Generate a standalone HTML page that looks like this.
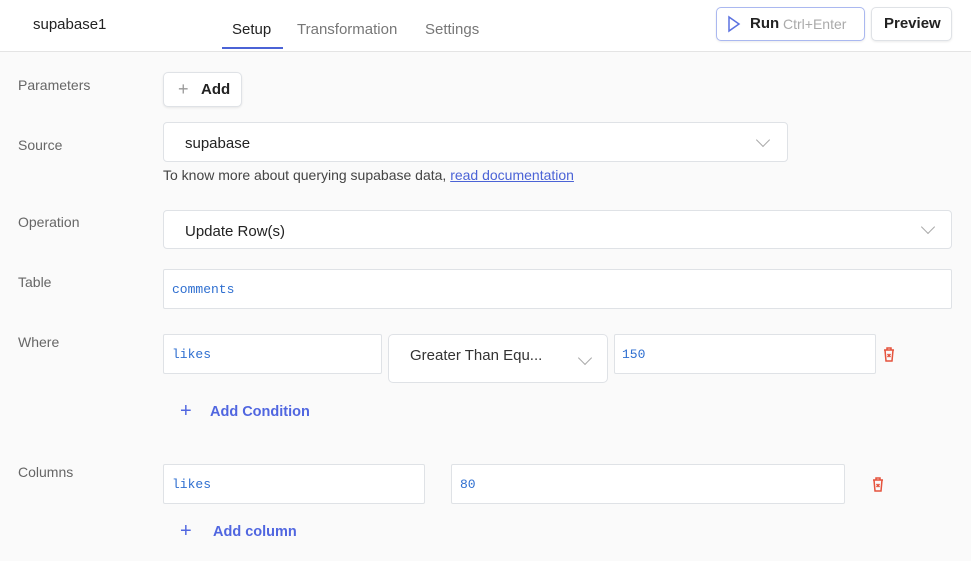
<!DOCTYPE html>
<html><head><style>
*{box-sizing:border-box;margin:0;padding:0}
body{width:971px;height:561px;background:#fafafa;font-family:"Liberation Sans",sans-serif;position:relative;overflow:hidden;color:#222}
.a{position:absolute}
.hdr{left:0;top:0;width:971px;height:52px;background:#fff;border-bottom:1px solid #e4e4e4}
.lbl{left:18px;font-size:14px;color:#666}
.box{background:#fff;border:1px solid #dfe2e6;border-radius:4px}
.mono{font-family:"Liberation Mono",monospace;font-size:13px;color:#2f6fd0}
.blue{color:#5066e0;font-size:14.5px;font-weight:bold}
.chev{position:absolute;width:10px;height:10px;border-right:1.5px solid #aaa;border-bottom:1.5px solid #aaa;transform:rotate(45deg)}
</style></head><body>
<div class="a hdr"></div>
<div class="a" style="left:33px;top:16px;font-size:15px;color:#222">supabase1</div>
<div class="a" style="left:232px;top:21px;font-size:15px;color:#222">Setup</div>
<div class="a" style="left:222px;top:47px;width:61px;height:2px;background:#4b63d6"></div>
<div class="a" style="left:297px;top:21px;font-size:15px;color:#777">Transformation</div>
<div class="a" style="left:425px;top:21px;font-size:15px;color:#777">Settings</div>
<div class="a box" style="left:716px;top:7px;width:149px;height:34px;border-color:#aab8f0;border-radius:5px;box-shadow:0 1px 2px rgba(0,0,0,.08)"></div>
<svg class="a" style="left:727px;top:15px" width="14" height="18"><path d="M2 2 L12 9 L2 16 Z" fill="none" stroke="#5b72e0" stroke-width="1.5"/></svg>
<div class="a" style="left:750px;top:15px;font-size:15px;font-weight:bold">Run</div>
<div class="a" style="left:783px;top:16px;font-size:14px;color:#aaa">Ctrl+Enter</div>
<div class="a box" style="left:871px;top:7px;width:81px;height:34px;border-radius:5px;box-shadow:0 1px 2px rgba(0,0,0,.08)"></div>
<div class="a" style="left:884px;top:15px;font-size:15px;font-weight:bold">Preview</div>

<div class="a lbl" style="top:77px">Parameters</div>
<div class="a box" style="left:163px;top:72px;width:79px;height:35px;border-radius:5px;box-shadow:0 1px 2px rgba(0,0,0,.08)"></div>
<div class="a" style="left:178px;top:79px;font-size:18px;color:#999">+</div>
<div class="a" style="left:201px;top:81px;font-size:15px;font-weight:bold">Add</div>

<div class="a lbl" style="top:137px">Source</div>
<div class="a box" style="left:163px;top:122px;width:625px;height:40px"></div>
<div class="a" style="left:185px;top:135px;font-size:15px">supabase</div>
<div class="chev" style="left:758px;top:135px"></div>
<div class="a" style="left:163px;top:167px;font-size:14px;color:#444">To know more about querying supabase data, <span style="color:#4b63d6;text-decoration:underline">read documentation</span></div>

<div class="a lbl" style="top:214px">Operation</div>
<div class="a box" style="left:163px;top:210px;width:789px;height:39px"></div>
<div class="a" style="left:185px;top:223px;font-size:15px">Update Row(s)</div>
<div class="chev" style="left:923px;top:222px"></div>

<div class="a lbl" style="top:274px">Table</div>
<div class="a box" style="left:163px;top:269px;width:789px;height:40px;border-radius:2px"></div>
<div class="a mono" style="left:172px;top:282px">comments</div>

<div class="a lbl" style="top:334px">Where</div>
<div class="a box" style="left:163px;top:334px;width:219px;height:40px;border-radius:2px"></div>
<div class="a mono" style="left:172px;top:347px">likes</div>
<div class="a box" style="left:388px;top:334px;width:220px;height:49px;border-radius:5px"></div>
<div class="a" style="left:410px;top:347px;font-size:15px;color:#333">Greater Than Equ...</div>
<div class="chev" style="left:580px;top:353px"></div>
<div class="a box" style="left:614px;top:334px;width:262px;height:40px;border-radius:2px"></div>
<div class="a mono" style="left:622px;top:347px">150</div>
<svg class="a" style="left:881px;top:345px" width="16" height="18"><path d="M3 5h10M6 5V3h4v2M4 5l1 11h6l1-11M6.5 9l3 3M9.5 9l-3 3" fill="none" stroke="#e5533d" stroke-width="1.5"/></svg>
<div class="a" style="left:180px;top:400px;font-size:20px;color:#5066e0">+</div>
<div class="a blue" style="left:210px;top:404px">Add Condition</div>

<div class="a lbl" style="top:464px">Columns</div>
<div class="a box" style="left:163px;top:464px;width:262px;height:40px;border-radius:2px"></div>
<div class="a mono" style="left:172px;top:477px">likes</div>
<div class="a box" style="left:451px;top:464px;width:394px;height:40px;border-radius:2px"></div>
<div class="a mono" style="left:460px;top:477px">80</div>
<svg class="a" style="left:870px;top:475px" width="16" height="18"><path d="M3 5h10M6 5V3h4v2M4 5l1 11h6l1-11M6.5 9l3 3M9.5 9l-3 3" fill="none" stroke="#e5533d" stroke-width="1.5"/></svg>
<div class="a" style="left:180px;top:520px;font-size:20px;color:#5066e0">+</div>
<div class="a blue" style="left:213px;top:524px">Add column</div>
</body></html>
